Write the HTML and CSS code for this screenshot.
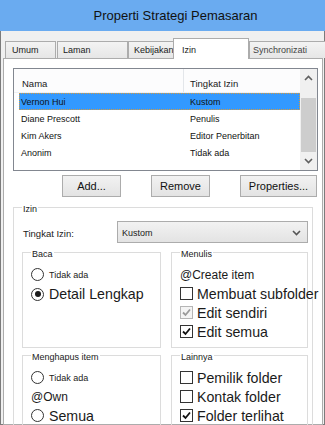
FILE: index.html
```html
<!DOCTYPE html>
<html lang="id">
<head>
<meta charset="UTF-8">
<title>Properti Strategi Pemasaran</title>
<link rel="stylesheet" href="styles.css">
</head>
<body>
<div class="window">
  <div class="titlebar">Properti Strategi Pemasaran</div>
  <div class="frame">
    <div class="tabs">
      <div class="tab tab-umum">Umum</div>
      <div class="tab tab-laman">Laman</div>
      <div class="tab tab-kebijakan">Kebijakan</div>
      <div class="tab tab-izin active">Izin</div>
      <div class="tab tab-sync">Synchronizati</div>
    </div>
    <div class="panel">
      <div class="userlist">
        <div class="userlist-main">
          <div class="list-head"><span>Nama</span><span>Tingkat Izin</span></div>
          <div class="list-row selected"><span>Vernon Hui</span><span>Kustom</span></div>
          <div class="list-row"><span>Diane Prescott</span><span>Penulis</span></div>
          <div class="list-row"><span>Kim Akers</span><span>Editor Penerbitan</span></div>
          <div class="list-row"><span>Anonim</span><span>Tidak ada</span></div>
        </div>
        <div class="scrollbar">
          <span class="arrow arrow-up"><svg width="9" height="6" viewBox="0 0 9 6"><path d="M1 5 L4.5 1.5 L8 5" fill="none" stroke="#606060" stroke-width="1.6"/></svg></span>
          <span class="thumb"></span>
          <span class="arrow arrow-down"><svg width="9" height="6" viewBox="0 0 9 6"><path d="M1 1 L4.5 4.5 L8 1" fill="none" stroke="#606060" stroke-width="1.6"/></svg></span>
        </div>
      </div>

      <div class="actions">
        <button type="button" class="btn-add">Add...</button>
        <button type="button" class="btn-remove">Remove</button>
        <button type="button" class="btn-props">Properties...</button>
      </div>

      <fieldset class="group group-izin">
        <legend>Izin</legend>
        <div class="level-row">
          <label class="level-label">Tingkat Izin:</label>
          <div class="dropdown">
            <span>Kustom</span>
            <svg width="9" height="6" viewBox="0 0 9 6"><path d="M1 1 L4.5 4.5 L8 1" fill="none" stroke="#555" stroke-width="1.6"/></svg>
          </div>
        </div>

        <div class="subgroups">
          <fieldset class="group sub">
            <legend>Baca</legend>
            <div class="opt"><span class="radio"></span><span class="txt-small">Tidak ada</span></div>
            <div class="opt opt-tall"><span class="radio on"></span><span class="txt-big">Detail Lengkap</span></div>
          </fieldset>

          <fieldset class="group sub">
            <legend>Menulis</legend>
            <div class="opt"><span class="txt-mid">@Create item</span></div>
            <div class="opt"><span class="check"></span><span class="txt-big">Membuat subfolder</span></div>
            <div class="opt"><span class="check disabled"><svg width="11" height="11" viewBox="0 0 11 11"><path d="M2 5.5 L4.5 8 L9 2.5" fill="none" stroke="#9a9a9a" stroke-width="1.8"/></svg></span><span class="txt-big">Edit sendiri</span></div>
            <div class="opt"><span class="check"><svg width="11" height="11" viewBox="0 0 11 11"><path d="M2 5.5 L4.5 8 L9 2.5" fill="none" stroke="#111" stroke-width="1.8"/></svg></span><span class="txt-big">Edit semua</span></div>
          </fieldset>

          <fieldset class="group sub">
            <legend>Menghapus item</legend>
            <div class="opt"><span class="radio"></span><span class="txt-small">Tidak ada</span></div>
            <div class="opt"><span class="txt-mid">@Own</span></div>
            <div class="opt"><span class="radio"></span><span class="txt-big">Semua</span></div>
          </fieldset>

          <fieldset class="group sub">
            <legend>Lainnya</legend>
            <div class="opt"><span class="check"></span><span class="txt-big">Pemilik folder</span></div>
            <div class="opt"><span class="check"></span><span class="txt-big">Kontak folder</span></div>
            <div class="opt"><span class="check"><svg width="11" height="11" viewBox="0 0 11 11"><path d="M2 5.5 L4.5 8 L9 2.5" fill="none" stroke="#111" stroke-width="1.8"/></svg></span><span class="txt-big">Folder terlihat</span></div>
          </fieldset>
        </div>
      </fieldset>
    </div>
  </div>
</div>
</body>
</html>
```

FILE: styles.css
```css
body {
  margin: 0;
  font-family: "Liberation Sans", Arial, sans-serif;
  color: #1a1a1a;
}

.window {
  width: 325px;
  height: 425px;
  overflow: hidden;
  background: #f0f0f0;
}

.titlebar {
  height: 31px;
  box-sizing: border-box;
  padding-left: 26px;
  display: flex;
  align-items: center;
  justify-content: center;
  background: #6aabf0;
  font-size: 13px;
  color: #111;
}

.frame {
  height: 394px;
  box-sizing: border-box;
  border: 1px solid #7b7b7b;
  border-top: none;
  padding-top: 7px;
}

/* tabs */
.tabs {
  display: flex;
  align-items: flex-end;
  height: 21px;
  padding-left: 4px;
  font-size: 9px;
  white-space: nowrap;
}
.tab {
  flex: none;
  box-sizing: border-box;
  height: 17px;
  margin-bottom: 1px;
  line-height: 16px;
  border: 1px solid #acacac;
  border-bottom: none;
  background: linear-gradient(#f3f3f3, #e6e6e6);
}
.tab-umum { width: 51px; margin-right: 1px; padding-left: 6px; }
.tab-laman { width: 71px; padding-left: 5px; }
.tab-kebijakan { width: 49px; padding-left: 5px; }
.tab-izin {
  position: relative;
  z-index: 1;
  width: 76px;
  height: 21px;
  margin: 0 0 0 -4px;
  padding: 3px 0 1px 8px;
  background: #fff;
}
.tab-sync { width: 80px; padding-left: 3px; color: #444; }

.panel {
  width: 320px;
  height: 367px;
  box-sizing: border-box;
  margin: -1px 0 0 2px;
  padding: 9px 4px 0 9px;
  background: #fff;
  border: 1px solid #acacac;
}

/* user list */
.userlist {
  display: flex;
  height: 103px;
  box-sizing: border-box;
  border: 1px solid #828790;
  background: #fff;
}
.userlist-main {
  flex: 1;
}
.list-head {
  display: grid;
  grid-template-columns: 170px 1fr;
  height: 24px;
  font-size: 9.5px;
  background: #fcfcfd;
  border-bottom: 1px solid #eef0f3;
  box-sizing: border-box;
}
.list-head span {
  padding: 9px 0 0 8px;
}
.list-head span:first-child {
  border-right: 1px solid #e3e6ea;
}
.list-head span:last-child {
  padding-left: 6px;
}
.list-row {
  display: grid;
  grid-template-columns: 169px 1fr;
  height: 17px;
  box-sizing: border-box;
  padding-top: 2px;
  margin-left: 5px;
  line-height: 15px;
  font-size: 9px;
  color: #111;
}
.list-row span {
  padding-left: 2px;
}
.list-row.selected {
  background: #3399ff;
  outline: 1px dotted #d89a3c;
  outline-offset: -1px;
}

.scrollbar {
  width: 17px;
  display: flex;
  flex-direction: column;
  background: #f0f0f0;
}
.arrow {
  display: flex;
  align-items: center;
  justify-content: center;
  height: 17px;
}
.arrow-down {
  height: 18px;
}
.thumb {
  height: 54px;
  margin: 12px 1px 0;
  background: #cdcdcd;
}

/* buttons */
.actions {
  display: flex;
  justify-content: flex-end;
  gap: 30px;
  margin-top: 4px;
  padding-right: 1px;
}
.actions button {
  height: 22px;
  padding: 0;
  border: 1px solid #acacac;
  background: linear-gradient(#f2f2f2, #e3e3e3);
  font-family: inherit;
  font-size: 11px;
  color: #111;
}
.btn-add, .btn-remove { width: 59px; }
.btn-props { width: 77px; }

/* group boxes */
.group {
  margin: 0;
  min-width: 0;
  border: 1px solid #dcdcdc;
}
.group legend {
  padding: 4px 1px 0;
  font-size: 9px;
  line-height: 11px;
  color: #222;
}
.group-izin {
  width: 300px;
  box-sizing: border-box;
  margin-top: 3px;
  padding: 6px 4px 20px 8px;
}

.level-row {
  display: flex;
  align-items: center;
  height: 22px;
}
.level-label {
  width: 95px;
  padding-left: 1px;
  box-sizing: border-box;
  font-size: 9.5px;
  padding-top: 2px;
}
.dropdown {
  width: 191px;
  height: 22px;
  box-sizing: border-box;
  display: flex;
  align-items: center;
  justify-content: space-between;
  padding: 2px 6px 0 4px;
  border: 1px solid #acacac;
  background: linear-gradient(#f2f2f2, #e3e3e3);
  font-size: 9px;
}

.subgroups {
  display: grid;
  grid-template-columns: 139px 137px;
  column-gap: 10px;
  margin-top: 2px;
}
.sub {
  padding: 5px 4px 6px 8px;
}

.opt {
  display: flex;
  align-items: center;
  height: 19px;
  white-space: nowrap;
}
.opt-tall {
  height: 20px;
}

.radio {
  flex: none;
  width: 13px;
  height: 13px;
  box-sizing: border-box;
  border: 1px solid #333;
  border-radius: 50%;
  background: #fff;
  display: flex;
  align-items: center;
  justify-content: center;
  margin-right: 5px;
}
.radio.on::after {
  content: "";
  width: 6px;
  height: 6px;
  border-radius: 50%;
  background: #1a1a1a;
}

.check {
  flex: none;
  width: 13px;
  height: 13px;
  box-sizing: border-box;
  border: 1px solid #333;
  background: #fff;
  display: flex;
  align-items: center;
  justify-content: center;
  margin-right: 4px;
}
.check.disabled {
  border-color: #b5b5b5;
  background: #f4f4f4;
}

.txt-small { font-size: 9px; }
.txt-mid { font-size: 12px; }
.txt-big { font-size: 14.2px; }
```
